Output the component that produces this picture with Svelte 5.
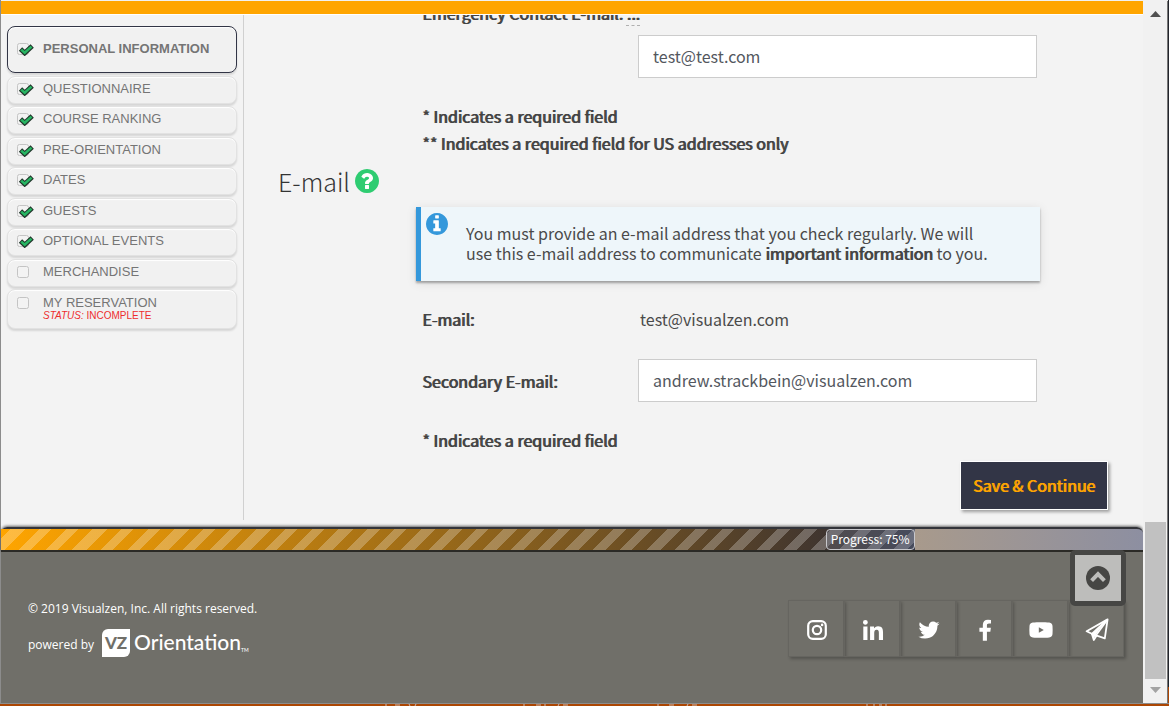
<script>
  const steps = [
    { name: 'Personal Information', done: true, current: true },
    { name: 'Questionnaire', done: true },
    { name: 'Course Ranking', done: true },
    { name: 'Pre-Orientation', done: true },
    { name: 'Dates', done: true },
    { name: 'Guests', done: true },
    { name: 'Optional Events', done: true },
    { name: 'Merchandise', done: false },
    { name: 'My Reservation', done: false, status: 'Incomplete' }
  ];

  const circle =
    'M1536 896q0 209-103 385.500T1153.500 1561 768 1664t-385.500-103T103 1281.500 0 896t103-385.500T382.500 231 768 128t385.500 103T1433 510.500 1536 896z';

  const progress = 80;
  let emergencyEmail = $state('test@test.com');
  let secondaryEmail = $state('andrew.strackbein@visualzen.com');
</script>

<div class="window">
  <div class="page">
    <header class="topbar"></header>

    <div class="body">
      <nav class="side" aria-label="Steps">
        <ul>
          {#each steps as step}
            <li>
              <a href="#step" class:current={step.current} class:tall={step.status}>
                <svg class="tick" viewBox="0 0 18 14" aria-hidden="true">
                  <rect x="1.500" y="1.500" width="11" height="11" rx="2" fill="#f3f3f3" stroke="#c4c4c4" />
                  {#if step.done}
                    <path d="M4.500 7 8.700 11 16.200 4" fill="none" stroke="#20352a" stroke-width="4.800" />
                    <path d="M5.200 7.600 8.700 10.800 15.500 4.600" fill="none" stroke="#27b562" stroke-width="2.600" />
                  {/if}
                </svg>
                <span class="name">
                  {step.name}
                  {#if step.status}
                    <small><em>Status:</em> {step.status}</small>
                  {/if}
                </span>
              </a>
            </li>
          {/each}
        </ul>
      </nav>

      <main>
        <form onsubmit={(e) => e.preventDefault()}>
          <div class="fields first">
            <label for="emergency">Emergency Contact E-mail: <abbr title="Optional">...</abbr></label>
            <div class="row">
              <span></span>
              <input id="emergency" type="text" bind:value={emergencyEmail} />
            </div>
            <p class="note">* Indicates a required field</p>
            <p class="note">** Indicates a required field for US addresses only</p>
          </div>

          <h2>
            E-mail
            <svg viewBox="0 128 1536 1536" role="img" aria-label="Help">
              <path fill="#2ecc71" d={circle} />
              <path
                fill="#fff"
                d="M896 1376v-192q0-14-9-23t-23-9H672q-14 0-23 9t-9 23v192q0 14 9 23t23 9h192q14 0 23-9t9-23zm256-672q0-88-55.500-163T958 425t-170-41q-243 0-371 213-15 24 8 42l132 100q7 6 19 6 16 0 25-12 53-68 86-92 34-24 86-24 48 0 85.500 26t37.500 59q0 38-20 61t-68 45q-63 28-115.500 86.500T640 1020v36q0 14 9 23t23 9h192q14 0 23-9t9-23q0-19 21.500-49.500T972 957q32-18 49-28.500t46-35 44.500-48 28-60.500 12.500-81z"
              />
            </svg>
          </h2>

          <div class="alert">
            <svg viewBox="0 128 1536 1536" aria-hidden="true">
              <path fill="#3498db" d={circle} />
              <path
                fill="#fff"
                d="M1024 1376v-160q0-14-9-23t-23-9h-96V672q0-14-9-23t-23-9H544q-14 0-23 9t-9 23v160q0 14 9 23t23 9h96v320h-96q-14 0-23 9t-9 23v160q0 14 9 23t23 9h448q14 0 23-9t9-23zM896 480V320q0-14-9-23t-23-9H672q-14 0-23 9t-9 23v160q0 14 9 23t23 9h192q14 0 23-9t9-23z"
              />
            </svg>
            <p>
              You must provide an e-mail address that you check regularly. We will use this e-mail
              address to communicate <strong>important information</strong> to you.
            </p>
          </div>

          <div class="fields">
            <div class="row">
              <span class="label">E-mail:</span>
              <span class="value">test@visualzen.com</span>
            </div>
            <div class="row">
              <label for="secondary">Secondary E-mail:</label>
              <input id="secondary" type="text" bind:value={secondaryEmail} />
            </div>
            <p class="note last">* Indicates a required field</p>
          </div>

          <div class="actions"><button type="submit" class="save">Save &amp; Continue</button></div>
        </form>
      </main>
    </div>

    <div class="progress">
      <div class="fill" style="width: {progress}%"><span>Progress: 75%</span></div>
    </div>

    <footer>
      <a href="#top" class="totop" aria-label="Back to top">
        <svg viewBox="0 0 24 24" aria-hidden="true">
          <circle cx="12" cy="12" r="12" fill="#464644" />
          <path d="M5.600 14.600 12 8.200 18.400 14.600" fill="none" stroke="#bdbdbb" stroke-width="4" />
        </svg>
      </a>
      <div class="legal">
        <p>© 2019 Visualzen, Inc. All rights reserved.</p>
        <p class="powered">
          <span class="by">powered by</span>
          <a href="#vz" class="brand"><b>VZ</b><span>Orientation</span><small>TM</small></a>
        </p>
      </div>
      <div class="social">
        <a href="#instagram" aria-label="Instagram">
          <svg viewBox="0 0 24 24">
            <g fill="none" stroke="#fff" stroke-width="2.200">
              <rect x="3.200" y="3.200" width="17.600" height="17.600" rx="4.600" />
              <circle cx="12" cy="12" r="4.200" />
            </g>
            <circle cx="17.100" cy="6.900" r="1.300" fill="#fff" />
          </svg>
        </a>
        <a href="#linkedin" aria-label="LinkedIn">
          <svg viewBox="-44 -10 536 536">
            <path
              fill="#fff"
              d="M100.280 480H7.400V180.900h92.880zM53.790 140.100C24.090 140.100 0 115.500 0 85.800a53.790 53.790 0 0 1 107.580 0c0 29.700-24.100 54.300-53.790 54.300zM447.900 480h-92.680V334.400c0-34.700-.7-79.200-48.290-79.200-48.290 0-55.690 37.700-55.690 76.700V480h-92.780V180.900h89.080v40.800h1.300c12.400-23.500 42.690-48.300 87.880-48.300 94 0 111.280 61.900 111.280 142.300V480z"
            />
          </svg>
        </a>
        <a href="#twitter" aria-label="Twitter">
          <svg viewBox="0 0 1792 1792">
            <path
              fill="#fff"
              d="M1684 408q-67 98-162 167 1 14 1 42 0 130-38 259.500T1369.500 1125 1185 1335.500t-258 146-323 54.500q-271 0-496-145 35 4 78 4 225 0 401-138-105-2-188-64.500T285 1033q33 5 61 5 43 0 85-11-112-23-185.500-111.500T172 710v-4q68 38 146 41-66-44-105-115t-39-154q0-88 44-163 121 149 294.500 238.500T884 653q-8-38-8-74 0-134 94.500-228.500T1199 256q140 0 236 102 109-21 205-78-37 115-142 178 93-10 186-50z"
            />
          </svg>
        </a>
        <a href="#facebook" aria-label="Facebook">
          <svg viewBox="0 0 1792 1792">
            <path
              fill="#fff"
              d="M1343 140v264h-157q-86 0-116 36t-30 108v189h293l-39 296h-254v659H734v-659H479V737h255V519q0-186 104-288.500T1115 128q147 0 228 12z"
            />
          </svg>
        </a>
        <a href="#youtube" aria-label="YouTube">
          <svg viewBox="0 0 24 24">
            <path
              fill="#fff"
              d="M12 4.200c3 0 6 .1 8.200.4 2.300.3 3.200 1.800 3.300 3.400.2 2.600.2 5.400 0 8-.1 1.600-1 3.100-3.300 3.400-2.200.3-5.200.4-8.200.4s-6-.1-8.200-.4C1.500 19.100.6 17.600.5 16c-.2-2.600-.2-5.400 0-8 .1-1.600 1-3.100 3.300-3.400C6 4.300 9 4.200 12 4.200z"
            />
            <path fill="#706f69" d="M9.800 9.200v5.600l5-2.800z" />
          </svg>
        </a>
        <a href="#newsletter" aria-label="Newsletter">
          <svg viewBox="0 0 24 24">
            <g fill="none" stroke="#fff" stroke-width="1.800" stroke-linejoin="round">
              <path d="M22.600 1.400 1.600 13.200 6.800 15.800 19.800 20.400z" />
              <path d="M22 2 6.800 15.800 8.800 22 11.600 17.600" />
              <path d="M22.400 1.800 11 17.200" />
            </g>
            <path fill="#fff" d="M7 16 20 4 10.800 16.400 8.600 21.800z" />
          </svg>
        </a>
      </div>
    </footer>
  </div>

  <div class="scrollbar" aria-hidden="true">
    <svg viewBox="0 0 11 6"><path d="M0 6 5.500 0 11 6z" fill="#505050" /></svg>
    <div class="thumb"></div>
    <svg viewBox="0 0 11 6"><path d="M0 0h11L5.500 6z" fill="#a3a3a3" /></svg>
  </div>
  <div class="edge"></div>
</div>
<svg class="behind" width="520" height="2" viewBox="0 0 520 2" aria-hidden="true">
  <path
    d="M1 0v2M10 1h5M24 0l1 2M31 0l-1 2M139 0v2M151 1h5M160 0v2M174 0l-1 2M178 1h5M273 0v2M284 1h5M303 0l-1 2M307 1h5M482 0v2M489 0v2M494 1h3M500 1h2"
    stroke="#cdb9b0"
    fill="none"
  />
</svg>

<style>
  :global(body) {
    margin: 0;
    background: #ab4603;
  }
  * {
    box-sizing: border-box;
  }
  p,
  h2,
  ul {
    margin: 0;
    padding: 0;
  }
  svg {
    display: block;
    flex: none;
  }
  .window {
    display: flex;
    min-height: calc(100vh - 2px);
    padding-top: 1px;
    border-left: 1px solid #8c8c8c;
    border-bottom: 1px solid #8c8c8c;
    background: #f1f1f1;
    font-family: 'Noto Sans CJK SC', 'Open Sans', sans-serif;
    font-size: 16px;
    line-height: 20px;
    color: #4a4a4a;
  }
  .behind {
    margin-left: 385px;
  }
  .page {
    flex: 1;
    min-width: 0;
    display: flex;
    flex-direction: column;
    background: #f3f3f3;
  }
  .topbar {
    height: 14px;
    background: #ffa500;
    border-bottom: 1px solid #fff;
  }
  .body {
    display: flex;
    height: 512px;
    overflow: hidden;
  }

  .side {
    width: 243px;
    flex: none;
    margin-bottom: 7px;
    padding: 11px 6px 0 6px;
    border-right: 1px solid #d0d0d0;
    font: 13px/16px 'Liberation Sans', Arial, sans-serif;
  }
  .side ul {
    display: flex;
    flex-direction: column;
    justify-content: space-between;
    height: 303px;
    list-style: none;
  }
  .side a {
    display: flex;
    gap: 9px;
    height: 28px;
    padding: 4px 8px;
    border: 1px solid #e2e2e2;
    border-radius: 8px;
    box-shadow: 0 2px 2px rgba(0, 0, 0, 0.12), inset 0 1px 1px #fff;
    background: #f1f1f1;
    color: #757575;
    text-decoration: none;
    text-transform: uppercase;
  }
  .side a.current {
    height: 47px;
    padding-top: 14px;
    border-color: #323546;
    font-weight: 700;
  }
  .side a.tall {
    height: 40px;
    padding-top: 5px;
  }
  .tick {
    width: 18px;
    height: 14px;
    margin-top: 1px;
  }
  .name small {
    display: block;
    font-size: 10px;
    line-height: 9px;
    color: #ee2e2e;
  }

  main {
    flex: 1;
    min-width: 0;
    padding: 0 35px 0 34px;
  }
  .fields {
    margin: 0 71px 0 144px;
  }
  .fields.first {
    margin-top: -12px;
  }
  label,
  .label,
  .note,
  strong,
  .save {
    font-weight: 400;
    text-shadow: 1px 0 0 currentColor;
  }
  .label,
  .note,
  label,
  strong {
    color: #434343;
  }
  .fields.first label {
    display: block;
    height: 32px;
  }
  abbr {
    text-decoration: none;
    border-bottom: 1px dashed #b0b0b0;
  }
  .row {
    display: grid;
    grid-template-columns: 216px 1fr;
    align-items: center;
    margin-bottom: 25px;
  }
  input {
    width: 100%;
    min-width: 0;
    height: 43px;
    padding: 0 14px 2px;
    border: 1px solid #ccc;
    background: #fff;
    font: inherit;
    color: #53575e;
  }
  .note {
    line-height: 27px;
  }
  h2 {
    display: flex;
    align-items: center;
    gap: 5px;
    height: 32px;
    margin-top: 8px;
    font-size: 25px;
    font-weight: 300;
    color: #333;
  }
  h2 svg {
    width: 24px;
    height: 24px;
  }
  .alert {
    display: flex;
    gap: 18px;
    margin: 10px 68px 28px 138px;
    min-height: 74px;
    padding: 6px 40px 12px 5px;
    border-left: 5px solid #3498db;
    background: #eef6fa;
    box-shadow: 0 2px 2px rgba(0, 0, 0, 0.3), 0 2px 10px rgba(0, 0, 0, 0.1);
  }
  .alert svg {
    width: 22px;
    height: 22px;
  }
  .alert p {
    padding-top: 10px;
  }
  .value {
    padding-left: 2px;
  }
  .row:has(.value) {
    height: 20px;
    margin-bottom: 30px;
  }
  .actions {
    display: flex;
    justify-content: flex-end;
    padding-top: 7px;
  }
  .save {
    height: 49px;
    padding: 0 12px 2px;
    border: 1px solid #fff;
    background: #323546;
    box-shadow: 2px 2px 3px rgba(0, 0, 0, 0.35);
    color: #ffa500;
    font-family: inherit;
    font-size: 16px;
  }

  .progress {
    height: 25px;
    border-top: 2px solid #33343a;
    border-bottom: 2px solid #2b2a26;
    border-radius: 6px 6px 0 0;
    background: linear-gradient(to right, #ffd27f, #a89a8c 80%, #8d8fa1);
    box-shadow: 0 -1px 3px rgba(0, 0, 0, 0.6);
  }
  .fill {
    display: flex;
    justify-content: flex-end;
    height: 21px;
    background: repeating-linear-gradient(
        135deg,
        transparent 0 7px,
        rgba(255, 255, 255, 0.25) 7px 17px,
        transparent 17px 27px,
        rgba(255, 255, 255, 0.25) 27px 36px,
        transparent 36px 46px,
        rgba(255, 255, 255, 0.25) 46px 55px,
        transparent 55px 58px
      ),
      linear-gradient(to right, #ffa500, #40352f 90%, #323546);
  }
  .fill span {
    padding: 0 4px;
    border: 1px solid #c8c8cc;
    border-radius: 4px;
    background: rgba(120, 125, 145, 0.3);
    color: #fff;
    font-size: 12px;
    line-height: 18px;
  }

  footer {
    position: relative;
    flex: 1;
    display: flex;
    justify-content: space-between;
    align-items: flex-start;
    padding: 48px 19px 46px 27px;
    background: #706f69;
    color: #fff;
    font: 600 12px/18px 'Open Sans', sans-serif;
  }
  .legal {
    font-weight: 500;
  }
  .powered {
    display: flex;
    align-items: center;
    gap: 8px;
    height: 28px;
    margin-top: 11px;
  }
  .by {
    padding-top: 4px;
  }
  .brand {
    display: flex;
    align-items: center;
    color: #fff;
    text-decoration: none;
    font-family: Lato, sans-serif;
  }
  .brand b {
    width: 28px;
    border-radius: 6px 0 6px 0;
    background: #fff;
    color: #706f69;
    font-size: 17px;
    line-height: 28px;
    font-weight: 900;
    text-align: center;
  }
  .brand span {
    margin-left: 4px;
    padding-bottom: 2px;
    font-size: 21px;
    font-weight: 500;
  }
  .brand small {
    align-self: flex-end;
    font-size: 5px;
    line-height: 14px;
  }
  .social {
    display: flex;
  }
  .social a {
    display: grid;
    place-items: center;
    width: 56px;
    height: 57px;
    padding: 3px 0 0 1px;
    border: 1px solid #666560;
    box-shadow: 2px 2px 3px rgba(0, 0, 0, 0.25);
  }
  .social svg {
    width: 24px;
    height: 24px;
  }
  .totop {
    position: absolute;
    top: -2px;
    right: 17px;
    display: grid;
    place-items: center;
    width: 56px;
    height: 56px;
    border: 5px solid #464644;
    border-radius: 5px;
    background: #bdbdbb;
    z-index: 1;
  }
  .totop svg {
    width: 24px;
    height: 24px;
  }

  .scrollbar {
    width: 25px;
    flex: none;
    display: flex;
    flex-direction: column;
    align-items: center;
    padding: 10px 2px;
    border-right: 1px solid #777;
    background: #f1f1f1;
  }
  .scrollbar svg {
    width: 11px;
    height: 6px;
  }
  .thumb {
    width: 21px;
    height: 157px;
    margin: auto 0 8px;
    background: #c1c1c1;
  }
  .edge {
    width: 1px;
    margin-top: -1px;
    background: linear-gradient(to top, #ab4603 16px, #22252c 16px);
  }
</style>
